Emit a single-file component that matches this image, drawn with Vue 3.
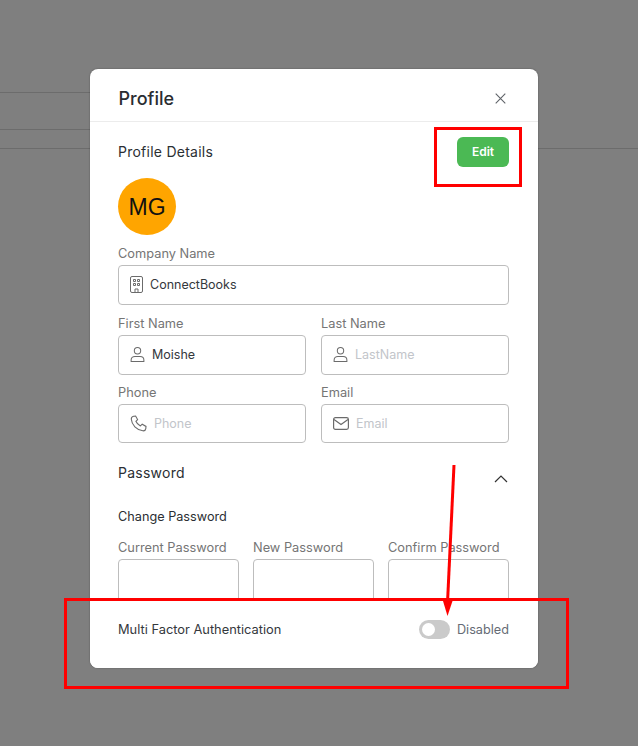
<script setup>
const nameFields = [
  { label: 'First Name', value: 'Moishe', placeholder: 'FirstName', icon: 'user' },
  { label: 'Last Name', value: '', placeholder: 'LastName', icon: 'user' },
  { label: 'Phone', value: '', placeholder: 'Phone', icon: 'phone' },
  { label: 'Email', value: '', placeholder: 'Email', icon: 'mail' },
];

const passwordFields = ['Current Password', 'New Password', 'Confirm Password'];
</script>

<template>
  <div class="page">
    <div class="bg-line line-a"></div>
    <div class="bg-line line-b"></div>
    <div class="bg-line line-c"></div>

    <div class="modal">
      <header class="modal-header">
        <h2 class="modal-title">Profile</h2>
        <svg class="close" width="11" height="11" viewBox="0 0 11 11" fill="none" stroke="#5f6368" stroke-width="1.1">
          <path d="M.7.7l9.600 9.600M10.300.7.700 10.300" />
        </svg>
      </header>

      <div class="modal-body">
        <div class="section-row">
          <span class="section-title details">Profile Details</span>
          <button class="edit-btn">Edit</button>
        </div>

        <div class="avatar">MG</div>

        <div class="field company">
          <label>Company Name</label>
          <div class="input tall">
            <svg class="icon" width="13" height="17" viewBox="0 0 13 17" fill="none" stroke="#6b6b6b" stroke-width="1">
              <rect x=".5" y=".5" width="12" height="16" rx="1.500" />
              <path d="M3.500 3.500h2v2h-2zM7.500 3.500h2v2h-2zM3.500 7.500h2v2h-2zM7.500 7.500h2v2h-2zM5 16.500v-3.500h3v3.500" />
            </svg>
            <span class="value">ConnectBooks</span>
          </div>
        </div>

        <div class="field-grid">
          <div class="field" v-for="field in nameFields" :key="field.label">
            <label>{{ field.label }}</label>
            <div class="input">
              <svg v-if="field.icon === 'user'" class="icon" width="15" height="17" viewBox="0 0 16 17" fill="none" stroke="#6b6b6b" stroke-width="1.100">
                <circle cx="8" cy="4.500" r="3.400" />
                <path d="M1.200 16h13.600v-1.600c0-2.200-1.800-3.800-4-3.800H5.200c-2.200 0-4 1.600-4 3.800z" />
              </svg>
              <svg v-else-if="field.icon === 'phone'" class="icon" width="17" height="17" viewBox="0 0 17 17" fill="none" stroke="#6b6b6b" stroke-width="1.100">
                <path d="M3.600 1.200 5.600 1l2 3.600-1.700 1.700c.8 2 2.400 3.600 4.500 4.600l1.800-1.700 3.800 2.200-.2 2.200c-.2 1.300-1.500 2.400-3 2.200C6.500 15 1.800 10 1.300 4.300 1.200 2.800 2.200 1.500 3.600 1.200z" />
              </svg>
              <svg v-else class="icon" width="16" height="13" viewBox="0 0 16 13" fill="none" stroke="#6b6b6b" stroke-width="1.200">
                <rect x=".6" y=".6" width="14.800" height="11.800" rx="1.800" />
                <path d="M1 2.500l7 5 7-5" />
              </svg>
              <span v-if="field.value" class="value">{{ field.value }}</span>
              <span v-else class="placeholder">{{ field.placeholder }}</span>
            </div>
          </div>
        </div>

        <div class="password-head">
          <span class="section-title">Password</span>
          <svg class="chevron" width="14" height="8" viewBox="0 0 14 8" fill="none" stroke="#333" stroke-width="1.200">
            <path d="M1 7l6-6 6 6" />
          </svg>
        </div>

        <div class="change-title">Change Password</div>

        <div class="password-grid">
          <div class="field" v-for="label in passwordFields" :key="label">
            <label>{{ label }}</label>
            <div class="input password"></div>
          </div>
        </div>
      </div>

      <footer class="modal-footer">
        <span class="mfa-label">Multi Factor Authentication</span>
        <div class="mfa-toggle">
          <span class="switch"><span class="knob"></span></span>
          <span class="mfa-state">Disabled</span>
        </div>
      </footer>
    </div>

    <!-- red annotations drawn on top of the screenshot -->
    <div class="mark mark-edit"></div>
    <div class="mark mark-mfa"></div>
    <svg class="arrow" width="638" height="746" viewBox="0 0 638 746" fill="none">
      <path d="M454 465 447.500 603" stroke="#ff0000" stroke-width="3" />
      <path d="M443 601h9.500l-5 15z" fill="#ff0000" />
    </svg>
  </div>
</template>

<style>
body {
  margin: 0;
}
</style>

<style scoped>
.page {
  position: relative;
  width: 638px;
  height: 746px;
  overflow: hidden;
  background: #7f7f7f;
  font-family: Inter, 'Liberation Sans', sans-serif;
  box-sizing: border-box;
  padding: 69px 100px 78px 90px;
}

.bg-line {
  position: absolute;
  left: 0;
  height: 1px;
  background: #6c6c6c;
}

.line-a {
  top: 92px;
  width: 90px;
}

.line-b {
  top: 129px;
  width: 90px;
}

.line-c {
  top: 148px;
  width: 638px;
}

.modal {
  position: relative;
  display: flex;
  flex-direction: column;
  width: 448px;
  height: 599px;
  background: #fff;
  border-radius: 8px;
  overflow: hidden;
  box-shadow: 0 0 2px rgba(0, 0, 0, 0.35);
}

.modal-header {
  display: flex;
  flex: none;
  align-items: center;
  justify-content: space-between;
  box-sizing: border-box;
  height: 53px;
  padding: 7px 32px 0 28.5px;
  border-bottom: 1px solid #ececec;
}

.modal-title {
  margin: 0;
  font-size: 18px;
  font-weight: 500;
  color: #2a2d31;
}

.modal-body {
  flex: 1;
  min-height: 0;
  overflow: hidden;
  padding: 15px 29px 0 28px;
}

.section-row {
  display: flex;
  align-items: center;
  justify-content: space-between;
  height: 30px;
}

.section-title {
  font-size: 14px;
  font-weight: 400;
  letter-spacing: 0.25px;
  color: #2b2f33;
}

.details {
  margin-top: -1px;
}

.edit-btn {
  width: 52px;
  height: 30px;
  padding: 0 0 2px;
  border: none;
  border-radius: 6px;
  background: #4bb954;
  color: #fff;
  font-family: inherit;
  font-size: 12px;
  font-weight: 600;
}

.avatar {
  display: flex;
  align-items: center;
  justify-content: center;
  box-sizing: border-box;
  width: 58px;
  height: 57px;
  margin-top: 11px;
  padding-top: 1px;
  border-radius: 50%;
  background: #ffa500;
  color: #111;
  font-family: 'Liberation Sans', Arial, sans-serif;
  font-size: 23px;
}

.field label {
  display: block;
  margin-bottom: 3px;
  font-size: 12.8px;
  line-height: 16px;
  color: #757575;
}

.company {
  margin-top: 11px;
}

.input {
  display: flex;
  align-items: center;
  gap: 7px;
  box-sizing: border-box;
  height: 39.5px;
  padding: 0 11px;
  border: 1px solid #bdbdbd;
  border-radius: 4px;
  font-size: 12.5px;
}

.tall {
  height: 40px;
  padding-bottom: 1px;
}

.icon {
  flex: none;
}

.value {
  color: #34383c;
}

.placeholder {
  color: #c2c5ca;
}

.field-grid {
  display: grid;
  grid-template-columns: 1fr 1fr;
  gap: 10px 15px;
  margin-top: 11px;
}

.password-head {
  display: flex;
  align-items: center;
  justify-content: space-between;
  margin-top: 20.5px;
  height: 18px;
}

.chevron {
  margin: 12px 1px 0 0;
}

.change-title {
  margin-top: 27.5px;
  font-size: 12.7px;
  line-height: 16px;
  color: #2b2f33;
}

.password-grid {
  display: grid;
  grid-template-columns: repeat(3, 1fr);
  gap: 14px;
  margin-top: 15px;
}

.password {
  height: 60px;
}

.modal-footer {
  display: flex;
  flex: none;
  align-items: center;
  justify-content: space-between;
  box-sizing: border-box;
  height: 68px;
  padding: 0 29px 10px 28px;
  background: #fff;
}

.mfa-label {
  font-size: 12.85px;
  color: #34383c;
}

.mfa-toggle {
  display: flex;
  align-items: center;
  gap: 7px;
}

.switch {
  display: flex;
  align-items: center;
  box-sizing: border-box;
  width: 31px;
  height: 19px;
  padding: 0 3px;
  border-radius: 10px;
  background: #cacaca;
}

.knob {
  width: 13px;
  height: 13px;
  border-radius: 50%;
  background: #fff;
}

.mfa-state {
  font-size: 12.7px;
  color: #666b75;
}

.mark {
  position: absolute;
  box-sizing: border-box;
  border: 3px solid #ff0000;
}

.mark-edit {
  left: 434px;
  top: 127px;
  width: 88px;
  height: 60px;
}

.mark-mfa {
  left: 64px;
  top: 598px;
  width: 505px;
  height: 91px;
}

.arrow {
  position: absolute;
  left: 0;
  top: 0;
  pointer-events: none;
}
</style>
